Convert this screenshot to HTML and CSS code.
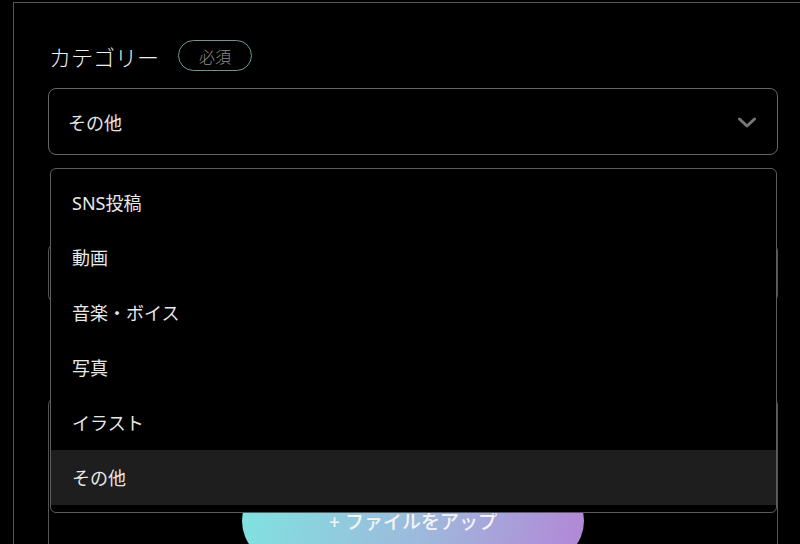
FILE: index.html
```html
<!DOCTYPE html>
<html lang="ja">
<head>
<meta charset="UTF-8" />
<meta name="viewport" content="width=device-width, initial-scale=1" />
<title>カテゴリー選択</title>
<link rel="stylesheet" href="styles.css">
</head>
<body>
  <div class="panel">
    <div class="field">
      <div class="fieldLabel">
        <span>カテゴリー</span>
        <span class="badge">必須</span>
      </div>
      <div class="selectWrap">
        <div class="select">
          <span>その他</span>
          <svg class="chevron" width="20" height="11" viewBox="0 0 20 11">
            <polyline points="2.5,2 10,9 17.5,2" fill="none" stroke="#777" stroke-width="3" stroke-linecap="round" stroke-linejoin="round" />
          </svg>
        </div>
        <ul class="options">
          <li>SNS投稿</li>
          <li>動画</li>
          <li>音楽・ボイス</li>
          <li>写真</li>
          <li>イラスト</li>
          <li class="active">その他</li>
        </ul>
      </div>
    </div>

    <!-- labels of these two fields sit under the open list -->
    <div class="field second">
      <div class="fieldLabel"></div>
      <div class="input"></div>
    </div>

    <div class="field third">
      <div class="fieldLabel"></div>
      <div class="uploadBox">
        <button class="uploadBtn">+ ファイルをアップ</button>
      </div>
    </div>
  </div>
</body>
</html>
```

FILE: styles.css
```css
body {
  margin: 0;
  background: #000;
  color: #e6e6e6;
  font-family: "Noto Sans", "Noto Sans CJK JP", sans-serif;
  overflow: hidden;
  height: 544px;
}
.panel {
  margin: 2px 0 0 13px;
  width: 730px;
  padding: 37px 35px 0 34px;
  height: 700px;
  border: 1px solid #555;
}
.fieldLabel {
  display: flex;
  align-items: center;
  gap: 19px;
  height: 31px;
  font-size: 22px;
  font-weight: 300;
  color: #eee;
  padding-left: 1px;
}
.badge {
  display: inline-flex;
  align-items: center;
  height: 29px;
  padding: 0 20px;
  border: 1px solid #6a9898;
  border-radius: 16px;
  font-size: 16px;
  color: #8c8c8c;
}
.selectWrap {
  position: relative;
  margin-top: 17px;
}
.select {
  display: flex;
  align-items: center;
  justify-content: space-between;
  height: 65px;
  padding: 0 20px 0 19px;
  border: 1px solid #666;
  border-radius: 8px;
  font-size: 18px;
}
.chevron {
  margin-top: 2px;
}
.options {
  position: absolute;
  top: calc(100% + 13px);
  left: 2px;
  right: 1px;
  z-index: 5;
  margin: 0;
  padding: 6px 0 7px;
  list-style: none;
  background: #000;
  border: 1px solid #5c5c5c;
  border-radius: 6px;
}
.options li {
  height: 55px;
  display: flex;
  align-items: center;
  padding-left: 21px;
  padding-bottom: 2px;
  box-sizing: border-box;
  font-size: 18px;
  color: #e8e8e8;
}
.options li.active {
  background: #1e1e1e;
}
.second {
  margin-top: 40px;
}
.input {
  margin-top: 17px;
  height: 58px;
  border: 1px solid #555;
  border-radius: 8px;
}
.third {
  margin-top: 46px;
}
.uploadBox {
  margin-top: 17px;
  height: 300px;
  padding-top: 82px;
  border: 1px solid #555;
  border-radius: 8px;
  box-sizing: border-box;
  display: flex;
  justify-content: center;
  align-items: flex-start;
}
.uploadBtn {
  width: 342px;
  height: 82px;
  padding-bottom: 2px;
  border: none;
  border-radius: 41px;
  background: linear-gradient(100deg, #7fe3e0 0%, #9fb7dc 55%, #b386d7 100%);
  color: #f4f4f4;
  font-family: "Noto Sans", "Noto Sans CJK JP", sans-serif;
  font-size: 19px;
  font-weight: 500;
  cursor: pointer;
}
```
